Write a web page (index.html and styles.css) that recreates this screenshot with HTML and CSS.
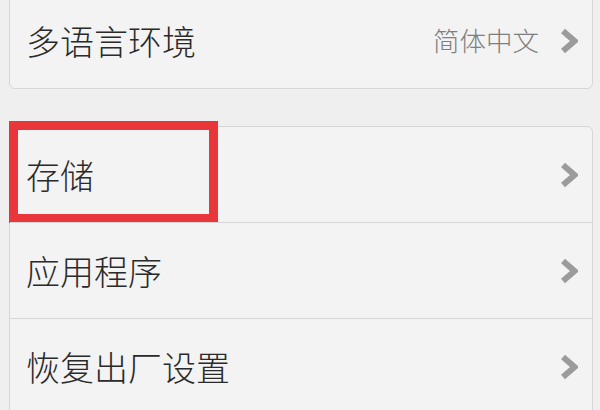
FILE: index.html
```html
<!DOCTYPE html>
<html lang="zh-CN">
<head>
<meta charset="utf-8">
<link rel="stylesheet" href="styles.css">
</head>
<body>
<div class="page">
  <div class="card card-top">
    <div class="row">
      <span class="label">多语言环境</span>
      <span class="value">简体中文</span>
      <svg class="chev" width="18" height="26" viewBox="0 0 18 26"><polyline points="3,3 14.5,13 3,23" fill="none" stroke="#9b9b9b" stroke-width="6"/></svg>
    </div>
  </div>
  <div class="card card-main">
    <div class="row highlighted">
      <span class="label">存储</span>
      <svg class="chev" width="18" height="26" viewBox="0 0 18 26"><polyline points="3,3 14.5,13 3,23" fill="none" stroke="#9b9b9b" stroke-width="6"/></svg>
      <div class="mark"></div>
    </div>
    <div class="row">
      <span class="label">应用程序</span>
      <svg class="chev" width="18" height="26" viewBox="0 0 18 26"><polyline points="3,3 14.5,13 3,23" fill="none" stroke="#9b9b9b" stroke-width="6"/></svg>
    </div>
    <div class="row">
      <span class="label">恢复出厂设置</span>
      <svg class="chev" width="18" height="26" viewBox="0 0 18 26"><polyline points="3,3 14.5,13 3,23" fill="none" stroke="#9b9b9b" stroke-width="6"/></svg>
    </div>
  </div>
</div>
</body>
</html>
```
FILE: styles.css
```css
html, body {
  margin: 0;
  padding: 0;
  background: #efefef;
  overflow: hidden;
}
body {
  font-family: "Noto Sans CJK SC", "Noto Sans", sans-serif;
  width: 600px;
  height: 410px;
}
.page {
  padding: 0 7px 0 9px;
}
.card {
  background: #f3f3f3;
  border: 1px solid #d6d6d6;
  border-radius: 6px;
}
.card-top {
  margin-top: -8px;
}
.card-main {
  margin-top: 37px;
}
.row {
  position: relative;
  display: flex;
  align-items: center;
  height: 95px;
  padding: 0 14px 0 16px;
}
.row + .row {
  border-top: 1px solid #d6d6d6;
}
.label {
  flex: 1;
  font-size: 34px;
  font-weight: 300;
  color: #2a2a2a;
  line-height: 1;
}
.value {
  font-size: 26.5px;
  font-weight: 300;
  color: #7f7f7f;
  margin-right: 21px;
  line-height: 1;
}
.chev {
  display: block;
}
.mark {
  position: absolute;
  left: -1px;
  top: -6px;
  width: 209px;
  height: 102px;
  box-sizing: border-box;
  border: 9px solid #e8363b;
}
```
